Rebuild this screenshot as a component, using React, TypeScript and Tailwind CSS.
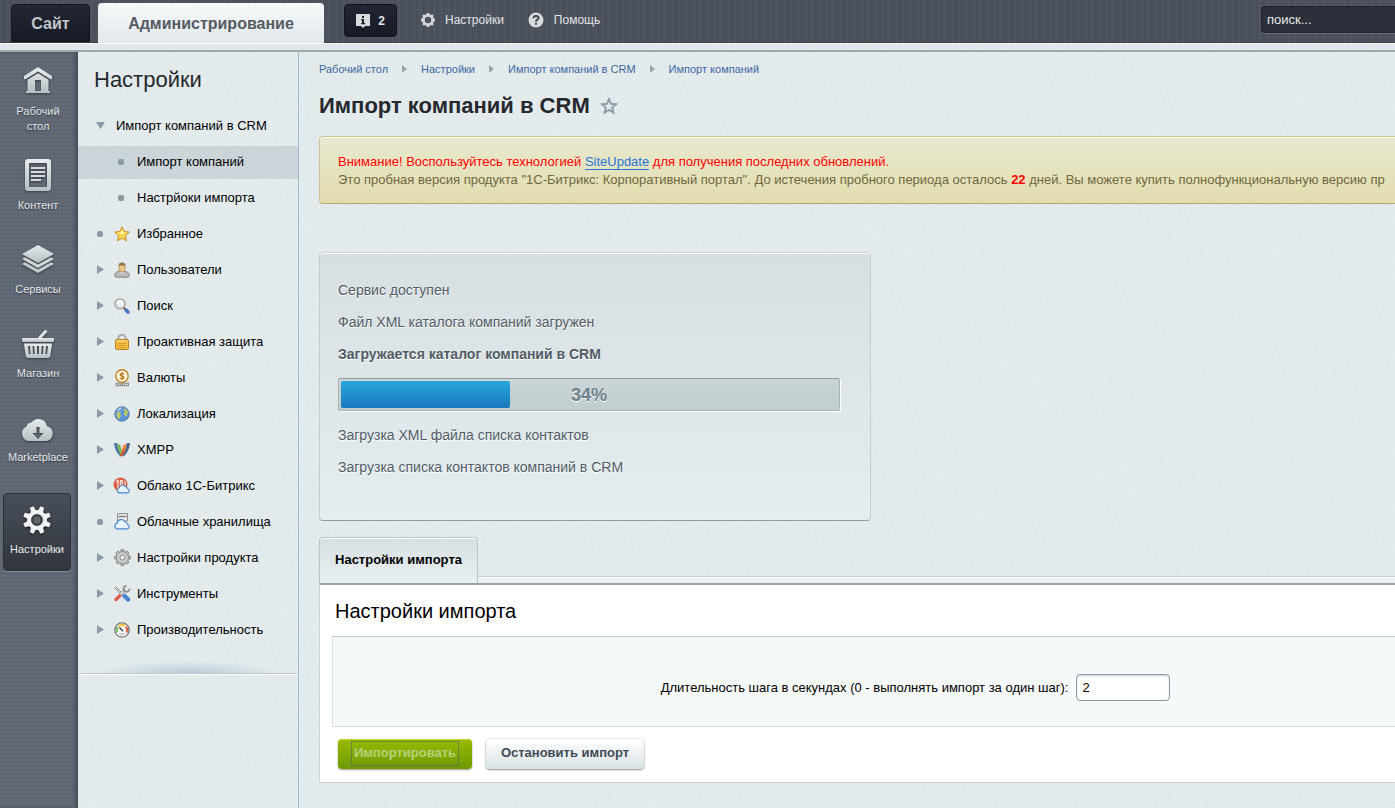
import React, { useState } from 'react';

type IconProps = { className?: string };

// ---- left bar icons ----

const MetalGradient = ({ id }: { id: string }) => (
  <defs>
    <linearGradient id={id} x1="0" y1="0" x2="0" y2="1">
      <stop offset="0" stopColor="#e6ecee" />
      <stop offset="1" stopColor="#b6bfc3" />
    </linearGradient>
  </defs>
);

const HomeIcon = () => (
  <svg width="32" height="32" viewBox="0 0 32 32" className="drop-shadow-[0_1px_1px_rgba(0,0,0,0.45)]">
    <MetalGradient id="gHome" />
    <path fill="url(#gHome)" fillRule="evenodd" d="M16 2 30 11v3l-1 .6L16 6.400 3 14.600l-1-.6v-3zM16 8.200l10.500 6.600V26H28v2H4v-2h1.500V14.800zM13 15v11h6V15z" />
  </svg>
);

const ContentIcon = () => (
  <svg width="32" height="32" viewBox="0 0 32 32" className="drop-shadow-[0_1px_1px_rgba(0,0,0,0.45)]">
    <MetalGradient id="gDoc" />
    <path fill="url(#gDoc)" fillRule="evenodd" d="M6 0h20a3 3 0 0 1 3 3v26a3 3 0 0 1-3 3H6a3 3 0 0 1-3-3V3a3 3 0 0 1 3-3zM8 4a1 1 0 0 0-1 1v22a1 1 0 0 0 1 1h16a1 1 0 0 0 1-1V5a1 1 0 0 0-1-1z" />
    <path fill="#d3dadd" d="M9 8h14v2H9zM9 12h14v2H9zM9 16h14v2H9zM9 20h10v2H9z" />
  </svg>
);

const ServicesIcon = () => (
  <svg width="32" height="32" viewBox="0 0 32 32" className="drop-shadow-[0_1px_1px_rgba(0,0,0,0.45)]">
    <MetalGradient id="gLay" />
    <path fill="url(#gLay)" d="M16 2 32 11 16 20 0 11z" />
    <path fill="#ccd4d7" d="m0 16 3-1.700L16 21.600l13-7.300L32 16 16 25z" />
    <path fill="#c0c9cc" d="m0 21 3-1.700L16 26.600l13-7.300L32 21 16 30z" />
  </svg>
);

const ShopIcon = () => (
  <svg width="32" height="32" viewBox="0 0 32 32" className="drop-shadow-[0_1px_1px_rgba(0,0,0,0.45)]">
    <MetalGradient id="gShop" />
    <path fill="none" stroke="#dfe5e7" strokeWidth="3" strokeLinecap="round" d="m17.500 11 6-6.500" />
    <path fill="url(#gShop)" d="M1 11h30a1 1 0 0 1 1 1v2a1 1 0 0 1-1 1H1a1 1 0 0 1-1-1v-2a1 1 0 0 1 1-1z" />
    <path fill="url(#gShop)" fillRule="evenodd" d="M2 16.500h28L28.500 28a3 3 0 0 1-3 3h-19a3 3 0 0 1-3-3zM6 19l.9 8h1.700L8 19zM10.500 19l.5 8h1.700l-.4-8zM15 19v8h2v-8zM19.700 19l-.4 8H21l.5-8zM24 19l-.6 8h1.700l.9-8z" />
  </svg>
);

const MarketIcon = () => (
  <svg width="32" height="32" viewBox="0 0 32 32" className="drop-shadow-[0_1px_1px_rgba(0,0,0,0.45)]">
    <MetalGradient id="gMkt" />
    <path fill="url(#gMkt)" fillRule="evenodd" d="M7.500 30A7.600 7.600 0 0 1 4.500 15.500a5.500 5.500 0 0 1 5-4A8.500 8.500 0 0 1 17 8a9 9 0 0 1 8 7.200A7.600 7.600 0 0 1 24.500 30zM14.500 16v6h-4l5.500 6 5.500-6h-4v-6z" />
  </svg>
);

const gearTeeth = [0, 45, 90, 135, 180, 225, 270, 315];

const SettingsIcon = () => (
  <svg width="32" height="32" viewBox="0 0 32 32" className="drop-shadow-[0_1px_1px_rgba(0,0,0,0.6)]">
    <g fill="#f0f2f3">
      {gearTeeth.map(a => (
        <path key={a} d="M13.200 8 14 2h4l.8 6z" transform={`rotate(${a + 22.5} 16 16)`} />
      ))}
      <circle cx="16" cy="16" r="10" />
    </g>
    <circle cx="16" cy="16" r="4.500" fill="none" stroke="#3d444b" strokeWidth="3" />
    <circle cx="16" cy="16" r="3" fill="#5a6169" />
  </svg>
);

// ---- top panel icons ----

const InfoIcon = () => (
  <svg width="14" height="14" viewBox="0 0 14 14">
    <path fill="#d6dbde" fillRule="evenodd" d="M0 0h14v12H9l-2 2-2-2H0zM6 2v2h2V2zM5 5v1.300h1V9H5v1.200h4.200V9H8V5z" />
  </svg>
);

const SmallGearIcon = () => (
  <svg width="14" height="14" viewBox="0 0 14 14">
    <circle cx="7" cy="7" r="4.600" fill="none" stroke="#d3d8db" strokeWidth="2.800" />
    <g fill="#d3d8db">
      {gearTeeth.map(a => (
        <path key={a} d="M5.500 2 5.900 0h2.200l.4 2z" transform={`rotate(${a} 7 7)`} />
      ))}
    </g>
  </svg>
);

const HelpIcon = () => (
  <svg width="16" height="16" viewBox="0 0 16 16">
    <circle cx="8" cy="8" r="7.500" fill="#d6dbde" />
    <path fill="none" stroke="#454b55" strokeWidth="2" d="M5.500 6.300C5.500 4.500 6.500 3.900 8 3.900s2.500.8 2.500 2.100C10.500 7.700 8 7.600 8 9.700" />
    <path fill="#454b55" d="M7 10.800h2v2H7z" />
  </svg>
);

// ---- submenu icons ----

const StarIcon = () => (
  <svg width="16" height="16" viewBox="0 0 16 16">
    <path fill="#fbd94a" stroke="#c98a25" strokeLinejoin="round" d="m8 .8 2.200 4.700 5.100.6-3.800 3.500 1 5.200L8 12.200l-4.500 2.600 1-5.200L.7 6.100l5.100-.6z" />
    <path fill="#fff0a0" d="m8 3 1.500 3.500 3.500.4-5 1.600-5-1.600 3.500-.4z" />
  </svg>
);

const UserIcon = () => (
  <svg width="16" height="16" viewBox="0 0 16 16">
    <path fill="#bcbcbc" stroke="#858585" d="M.7 13.500c0-3 2.500-3.900 5-4.500h4.600c2.500.6 5 1.500 5 4.500 0 1-.5 1.700-1.500 1.700H2.200c-1 0-1.500-.7-1.500-1.700z" />
    <path fill="#e6e6e6" d="M5.500 9.500 8 12l2.500-2.500z" />
    <path fill="#efc58c" stroke="#b38448" strokeWidth=".8" d="M5 3.500h6v3C11 8.700 9.500 10 8 10S5 8.700 5 6.500z" />
    <path fill="#8d7350" d="M4.500 4.500c-.2-2.700 1-4 3.500-4s3.800 1.300 3.500 4L10.500 3h-5z" />
  </svg>
);

const SearchIcon = () => (
  <svg width="16" height="16" viewBox="0 0 16 16">
    <path stroke="#a04a38" strokeWidth="2" d="m9.500 9.500 2 2" />
    <path stroke="#4477c4" strokeWidth="3.600" strokeLinecap="round" d="m12.200 12.200 1.800 1.800" />
    <circle cx="6" cy="5.800" r="5" fill="#f4f6f7" stroke="#999" strokeWidth="1.300" />
    <path fill="none" stroke="#d4dadd" strokeWidth="1.500" d="M3 6a3 3 0 0 0 5 2.300" />
  </svg>
);

const LockIcon = () => (
  <svg width="16" height="16" viewBox="0 0 16 16">
    <path fill="none" stroke="#8d8d8d" strokeWidth="2" d="M4.300 7V4.500a3.700 3.700 0 0 1 7.400 0V7" />
    <path fill="none" stroke="#dadada" strokeWidth=".7" d="M4.300 7V4.500a3.700 3.700 0 0 1 7.400 0V7" />
    <rect x="1.500" y="5.500" width="13" height="10" rx="1.500" fill="#f3bd45" stroke="#ba8222" />
    <path stroke="#fbe18a" d="M3 7h10" />
    <path stroke="#d89c2c" d="M4 9.500h8M4 11.500h8M4 13.500h8" />
  </svg>
);

const CurrencyIcon = () => (
  <svg width="16" height="18" viewBox="0 0 16 18">
    <path fill="#dedede" stroke="#777" strokeWidth=".9" d="M2 14.200h12.500v2.500H2z" />
    <path stroke="#888" d="M4 15.500h8" strokeDasharray="1 1" />
    <circle cx="8" cy="7" r="6.200" fill="#fff6dd" stroke="#c18428" strokeWidth="1.400" />
    <path fill="none" stroke="#b9751a" strokeWidth="1.200" d="M10 5.200C9.500 4.500 6 4 6 5.700c0 1.700 4 1 4 2.800 0 1.700-3.500 1.400-4.200.5M8 3v8" />
  </svg>
);

const GlobeIcon = () => (
  <svg width="16" height="16" viewBox="0 0 16 16">
    <circle cx="8" cy="8" r="7.200" fill="#5b94d8" stroke="#5579ab" />
    <path fill="#b8d5f0" d="M2.500 5C3.500 2.500 6 1.300 8.500 1.500L6 4z" />
    <path fill="#b9cb62" d="M2.500 7 5 5.500l2 .8L6.200 8 7 9.500 6 12l-1 1.300C3 12 2.200 9.500 2.500 7zM10.500 2.500l2 1L14 6l-.8 2.800-1.200 2-1.500-1.600-.7-2L11 5.500 9.500 4z" />
  </svg>
);

const XmppIcon = () => (
  <svg width="18" height="16" viewBox="0 0 18 16">
    <path fill="#4f78ae" d="M1 1h3l5 11-1.500 2.500C4 11.500 1.500 7 1 1z" />
    <path fill="#7fb65a" d="M4 2l3 .5L10.500 13 9 14.500C6 11 4.500 7 4 2z" />
    <path fill="#49658f" d="M17 1h-3L9 12l1.500 2.500C14 11.500 16.500 7 17 1z" />
    <path fill="#e88a42" d="M13.500 2l-3.300 1L8 12l.7 2.500C12 11 13.200 7 13.500 2z" />
    <path fill="#cf5536" d="M11 6 8 12l-2 2.500 3-.5 2.500-4z" />
  </svg>
);

const BitrixCloudIcon = () => (
  <svg width="18" height="17" viewBox="0 0 18 17">
    <circle cx="7.500" cy="7.500" r="7" fill="#d8604a" />
    <path fill="none" stroke="#fbe7e2" strokeWidth="1.200" d="M3 5l2-1.500V12M7.500 12V3.500h1.800V8M12 9V4" />
    <path fill="#e6f2fd" stroke="#4a86cb" strokeWidth="1.100" d="M6.500 15.900a2.600 2.600 0 0 1-.3-5.100 3.400 3.400 0 0 1 6.400-1 2.500 2.500 0 0 1 2 2 2.100 2.100 0 0 1 .1 4.100z" />
  </svg>
);

const CloudStorageIcon = () => (
  <svg width="17" height="17" viewBox="0 0 17 17">
    <path fill="#e8e8e8" stroke="#8d8d8d" d="M3.500.6h10V8h-10z" />
    <path stroke="#7d7d7d" strokeWidth="1.300" d="M4.500 3.500h8" />
    <path fill="#e6f2fd" stroke="#4a86cb" strokeWidth="1.200" d="M3.500 15.900A2.900 2.900 0 0 1 3 10.200 4.200 4.200 0 0 1 11 9a3 3 0 0 1 2.600 2.500 2.300 2.300 0 0 1-.1 4.400z" />
  </svg>
);

const ProductGearIcon = () => (
  <svg width="17" height="17" viewBox="0 0 17 17">
    <g fill="#c4c4c4" stroke="#7f7f7f" strokeWidth=".9">
      {gearTeeth.map(a => (
        <path key={a} d="M6.800 3.500 7 .7h3l.2 2.800z" transform={`rotate(${a} 8.500 8.500)`} />
      ))}
      <circle cx="8.500" cy="8.500" r="5.800" />
    </g>
    <circle cx="8.500" cy="8.500" r="5.300" fill="#cfcfcf" />
    <circle cx="8.500" cy="8.500" r="2.600" fill="#e6ecee" stroke="#858585" />
  </svg>
);

const ToolsIcon = () => (
  <svg width="18" height="17" viewBox="0 0 18 17">
    <path stroke="#8a8a8a" strokeWidth="2.200" d="M2 2l7 7" />
    <path stroke="#e6e6e6" strokeWidth="1" d="M2 2l7 7" />
    <path stroke="#d95a48" strokeWidth="3.200" strokeLinecap="round" d="m3 14.500 4-4" />
    <path stroke="#8a8a8a" strokeWidth="2.600" d="m7.500 9.500 5-5" />
    <path stroke="#ececec" strokeWidth="1.200" d="m7.500 9.500 5-5" />
    <path fill="none" stroke="#8f8f8f" strokeWidth="1.800" d="M16.500 3.500A3 3 0 1 1 13.500.8" />
    <path stroke="#3f7ccc" strokeWidth="4.200" strokeLinecap="round" d="m11.500 11 3.500 3.500" />
    <path stroke="#79aae8" strokeWidth="1" d="m11 11.500 3.500 3.300" />
  </svg>
);

const SpeedIcon = () => (
  <svg width="16" height="16" viewBox="0 0 16 16">
    <circle cx="8" cy="8" r="7.200" fill="#fdfdfd" stroke="#777" strokeWidth="1.300" />
    <path fill="none" stroke="#7fc069" strokeWidth="2.200" d="M3.300 10.500A5 5 0 0 1 4 5" />
    <path fill="none" stroke="#efc13f" strokeWidth="2.200" d="M4.600 4.300a5 5 0 0 1 6.500-.3" />
    <path fill="none" stroke="#d9604c" strokeWidth="2.200" d="M11.900 4.700a5 5 0 0 1 .8 5.800" />
    <path stroke="#333" strokeWidth="1.300" d="m5.500 5.500 3.500 3.700" />
    <path fill="#ccc" d="M4.500 11h7L10 13.500H6z" />
  </svg>
);

const FavoriteIcon = ({ className }: IconProps) => (
  <svg width="18" height="18" viewBox="0 0 18 18" className={className}>
    <path fill="none" stroke="#8f9aab" strokeWidth="1.900" d="m9 2.200 2 4.600 5 .5-3.800 3.300 1.200 4.900L9 12.900l-4.400 2.600 1.200-4.900L2 7.300l5-.5z" />
  </svg>
);

const mainSections = [
  { label: 'Рабочий стол', icon: <HomeIcon /> },
  { label: 'Контент', icon: <ContentIcon /> },
  { label: 'Сервисы', icon: <ServicesIcon /> },
  { label: 'Магазин', icon: <ShopIcon /> },
  { label: 'Marketplace', icon: <MarketIcon /> },
];

type MenuItem = { label: string; icon?: React.ReactNode; marker: 'open' | 'closed' | 'dot'; nested?: boolean; active?: boolean };

const menuItems: MenuItem[] = [
  { label: 'Импорт компаний в CRM', marker: 'open' },
  { label: 'Импорт компаний', marker: 'dot', nested: true, active: true },
  { label: 'Настрйоки импорта', marker: 'dot', nested: true },
  { label: 'Избранное', marker: 'dot', icon: <StarIcon /> },
  { label: 'Пользователи', marker: 'closed', icon: <UserIcon /> },
  { label: 'Поиск', marker: 'closed', icon: <SearchIcon /> },
  { label: 'Проактивная защита', marker: 'closed', icon: <LockIcon /> },
  { label: 'Валюты', marker: 'closed', icon: <CurrencyIcon /> },
  { label: 'Локализация', marker: 'closed', icon: <GlobeIcon /> },
  { label: 'XMPP', marker: 'closed', icon: <XmppIcon /> },
  { label: 'Облако 1С-Битрикс', marker: 'closed', icon: <BitrixCloudIcon /> },
  { label: 'Облачные хранилища', marker: 'dot', icon: <CloudStorageIcon /> },
  { label: 'Настройки продукта', marker: 'closed', icon: <ProductGearIcon /> },
  { label: 'Инструменты', marker: 'closed', icon: <ToolsIcon /> },
  { label: 'Производительность', marker: 'closed', icon: <SpeedIcon /> },
];

const breadcrumbs = ['Рабочий стол', 'Настройки', 'Импорт компаний в CRM', 'Импорт компаний'];

const Marker = ({ kind }: { kind: MenuItem['marker'] }) => {
  if (kind === 'dot') return <span className="size-1.5 rounded-[2px] bg-[#8f99a6]" />;
  return (
    <svg width="9" height="9" viewBox="0 0 9 9" fill="#8f99a9">
      {kind === 'open' ? <path d="M0 1h9L4.500 8z" /> : <path d="M1 0v9l7-4.500z" />}
    </svg>
  );
};

const TopPanel = () => (
  <header>
    <div className="flex h-[43px] items-start border-b border-[#353b45] bg-[#4a515c] bg-[repeating-linear-gradient(90deg,rgba(255,255,255,0.04)_0_1px,transparent_1px_3px,rgba(0,0,0,0.05)_3px_4px,transparent_4px_7px),repeating-linear-gradient(0deg,rgba(255,255,255,0.03)_0_1px,transparent_1px_4px)] pl-[11px] text-xs text-[#e0e5e8]">
      <a href="#site" className="mt-1 flex h-[38px] w-[79px] items-center justify-center rounded-t border border-[#14161d] bg-linear-to-b from-[#222735] to-[#171a24] pt-0.5 text-base font-bold text-[#c0c6cb]">
        Сайт
      </a>
      <a href="#admin" className="-mb-px ml-2 flex h-10 w-[226px] items-center justify-center self-end rounded-t bg-linear-to-b from-[#f7f9fa] to-[#e0e8eb] pt-0.5 text-base font-bold text-[#555b63]">
        Администрирование
      </a>
      <button className="mt-1 ml-5 flex h-[33px] w-[53px] items-center justify-center gap-2 rounded border border-[#11141b] bg-linear-to-b from-[#212635] to-[#181b26] font-bold">
        <InfoIcon />
        <span>2</span>
      </button>
      <a href="#settings" className="ml-6 flex h-10 items-center gap-2.5">
        <SmallGearIcon />
        <span>Настройки</span>
      </a>
      <a href="#help" className="ml-6 flex h-10 items-center gap-2.5">
        <HelpIcon />
        <span>Помощь</span>
      </a>
      <input
        type="text"
        aria-label="Поиск"
        placeholder="поиск..."
        className="mt-1.5 ml-auto h-[27px] w-[134px] rounded-l border border-r-0 border-[#1f232b] bg-[#2b303a] px-[5px] text-[13px] text-white shadow-[0_1px_0_#6a717b] placeholder:text-[#e6eaec]"
      />
    </div>
    <div className="h-[9px] border-t border-b-2 border-t-white border-b-[#a1a9ab] bg-[#dfe7ea]" />
  </header>
);

const SectionBar = () => (
  <nav className="w-[78px] shrink-0 bg-[#636a77] bg-[radial-gradient(#5b626f_1px,transparent_1px)] bg-size-[4px_4px] pt-[13px] text-[11px] leading-[15px] text-[#e4e9ed] shadow-[inset_-3px_0_4px_-1px_rgba(30,35,45,0.5)]">
    {mainSections.map(s => (
      <a key={s.label} href="#section" className="flex min-h-[84px] flex-col items-center gap-[7px] pr-0.5 pb-[25px] text-center [text-shadow:0_1px_1px_rgba(0,0,0,0.5)]">
        {s.icon}
        <span className="max-w-[68px]">{s.label}</span>
      </a>
    ))}
    <a href="#section" className="-mt-0.5 ml-[3px] flex h-[78px] w-[68px] flex-col items-center gap-1.5 rounded border border-[#2c3138] bg-linear-to-b from-[#484f58] to-[#31363d] pt-2.5 shadow-[0_1px_0_rgba(255,255,255,0.2)]">
      <SettingsIcon />
      <span>Настройки</span>
    </a>
  </nav>
);

const SubMenu = () => (
  <aside className="w-[221px] shrink-0 border-r border-[#a3bad0] text-black">
    <div className="h-[622px] border-b border-[#bac6ce] bg-[radial-gradient(ellipse_90px_12px_at_50%_100%,rgba(150,180,205,0.55),transparent)] shadow-[0_1px_0_#fff]">
      <h2 className="mb-[15px] pt-[13px] pl-4 text-[22px] leading-[30px] text-[#24292e]">Настройки</h2>
      <ul>
        {menuItems.map(item => (
          <li key={item.label} className={`mb-[3px] h-[33px] ${item.active ? 'bg-[#cbd5d9]' : ''}`}>
            <a href="#menu" className={`flex h-full items-center pb-0.5 text-[13px] ${item.nested ? 'pl-[35px]' : 'pl-3.5'}`}>
              <span className="flex w-4 justify-center">
                <Marker kind={item.marker} />
              </span>
              {item.icon && <span className="ml-1 flex w-5 justify-center">{item.icon}</span>}
              <span className={item.icon ? 'ml-[5px]' : 'ml-2'}>{item.label}</span>
            </a>
          </li>
        ))}
      </ul>
    </div>
  </aside>
);

const ImportProgress = ({ percent }: { percent: number }) => (
  <section className="mt-12 h-[269px] w-[552px] rounded border border-x-[#c3cccf] border-t-[#ccd4d7] border-b-[#939b9e] bg-linear-to-b from-[#d7dfe2] to-[#e4edf0] px-[18px] pt-[21px] text-sm leading-8 text-[#515c66] shadow-[inset_0_1px_0_#fff] [text-shadow:0_1px_0_#fff]">
    <p>Сервис доступен</p>
    <p>Файл XML каталога компаний загружен</p>
    <p className="font-bold">Загружается каталог компаний в CRM</p>
    <div
      role="progressbar"
      aria-valuenow={percent}
      aria-label="Загрузка каталога"
      className="relative my-2 h-[33px] w-[502px] rounded-xs border border-[#a9b3b6] border-t-[#929b9e] bg-linear-to-b from-[#cbd5d8] to-[#c1cccd] p-0.5 shadow-[1px_1px_0_#fff]"
    >
      <div className="h-full rounded-xs bg-linear-to-b from-[#27a7dc] to-[#1c78be]" style={{ width: `${percent}%` }} />
      <span className="absolute inset-0 flex items-center justify-center text-lg font-bold text-[#6b7f8d]">{percent}%</span>
    </div>
    <p>Загрузка XML файла списка контактов</p>
    <p>Загрузка списка контактов компаний в CRM</p>
  </section>
);

const ImportSettings = () => {
  const [step, setStep] = useState('2');

  return (
    <section className="mt-4 text-[13px] text-black">
      <div role="tablist" className="flex items-end">
        <button
          role="tab"
          aria-selected="true"
          className="h-[46px] w-[159px] shrink-0 rounded-t border border-b-0 border-[#bcc6ca] bg-linear-to-b from-[#d6dfe2] to-[#e9f0f2] pb-0.5 font-bold shadow-[inset_0_1px_0_#fff]"
        >
          Настройки импорта
        </button>
        <div className="h-[7px] flex-1 border-t border-[#c3cdd1] bg-[#e9f0f2] shadow-[inset_0_1px_0_#fff]" />
      </div>
      <div className="rounded-bl-xs border-t-2 border-b border-l border-[#c9d4d8] border-t-[#9aa5a9] bg-white pb-[13px] pl-3">
        <h2 className="h-[51px] pt-2.5 pl-[3px] text-xl leading-[32px]">Настройки импорта</h2>
        <table className="w-full border-separate border-spacing-0 border border-r-0 border-t-[#bccad1] border-b-[#d5e1e8] border-l-[#d5e1e8] bg-[#f5f9f9]">
          <tbody>
            <tr className="h-[89px]">
              <td className="w-[70%] pt-3 pr-2 text-right">
                <label htmlFor="step">Длительность шага в секундах (0 - выполнять импорт за один шаг):</label>
              </td>
              <td className="pt-3">
                <input
                  id="step"
                  type="text"
                  value={step}
                  onChange={e => setStep(e.target.value)}
                  className="h-[27px] w-[94px] rounded border border-[#8e99a9] bg-white px-[5px] shadow-[inset_0_1px_2px_rgba(100,115,130,0.35)]"
                />
              </td>
            </tr>
          </tbody>
        </table>
        <div className="mt-3 flex gap-3.5 pl-1.5 font-bold">
          <button className="flex h-[30px] w-[134px] items-center justify-center rounded bg-linear-to-b from-[#97bb00] to-[#6f9a00] pb-0.5 text-[#b8d17c] shadow-[inset_0_1px_0_#c0da22,0_1px_2px_rgba(0,0,0,0.4)]">
            <span className="flex h-[25px] items-center border border-dotted border-[#4c5560] px-0.5">Импортировать</span>
          </button>
          <button className="h-[30px] w-[158px] rounded bg-linear-to-b from-white to-[#d8e2e6] pb-0.5 text-[#3f4b54] shadow-[0_0_1px_rgba(0,0,0,0.5),0_1px_2px_rgba(0,0,0,0.4)]">
            Остановить импорт
          </button>
        </div>
      </div>
    </section>
  );
};

export default function App() {
  return (
    <div className="flex min-h-screen flex-col overflow-hidden bg-[#e2eaec] font-['Liberation_Sans',Arial,sans-serif]">
      <TopPanel />
      <div className="flex flex-1">
        <SectionBar />
        <div className="flex min-w-0 flex-1 bg-[repeating-linear-gradient(45deg,rgba(255,255,255,0.12)_0_1px,transparent_1px_4px),repeating-linear-gradient(-30deg,rgba(200,215,220,0.12)_0_1px,transparent_1px_5px)]">
          <SubMenu />
          <main className="min-w-0 flex-1 pl-5">
            <nav aria-label="breadcrumb" className="flex items-center pt-[9px] text-[11px] leading-4 text-[#3d68a2]">
              {breadcrumbs.map((b, i) => (
                <React.Fragment key={b}>
                  {i > 0 && (
                    <svg width="5" height="8" viewBox="0 0 5 8" className="mx-3.5" fill="#9ba3ab">
                      <path d="M0 0v8l5-4z" />
                    </svg>
                  )}
                  <a href="#crumb">{b}</a>
                </React.Fragment>
              ))}
            </nav>
            <div className="mt-3.5 flex items-center gap-2.5">
              <h1 className="text-[22px] leading-[30px] font-bold text-[#25292f]">Импорт компаний в CRM</h1>
              <FavoriteIcon />
            </div>
            <div className="mt-[15px] h-[68px] overflow-hidden rounded-l border border-r-0 border-[#cfc38f] border-b-[#b9a968] bg-linear-to-b from-[#e8ead0] to-[#e2dcae] pt-4 pl-[18px] text-[13px] leading-[18px] whitespace-nowrap text-[#70673d] shadow-[inset_0_1px_0_#fff]">
              <p className="text-[#ff0000]">
                Внимание! Воспользуйтесь технологией{' '}
                <a href="#update" className="border-b border-[#2675d7] text-[#2675d7]">SiteUpdate</a> для получения последних обновлений.
              </p>
              <p>
                Это пробная версия продукта "1С-Битрикс: Корпоративный портал". До истечения пробного периода осталось{' '}
                <b className="text-[#ff0000]">22</b> дней. Вы можете купить полнофункциональную версию пр
              </p>
            </div>
            <ImportProgress percent={34} />
            <ImportSettings />
          </main>
        </div>
      </div>
    </div>
  );
}
